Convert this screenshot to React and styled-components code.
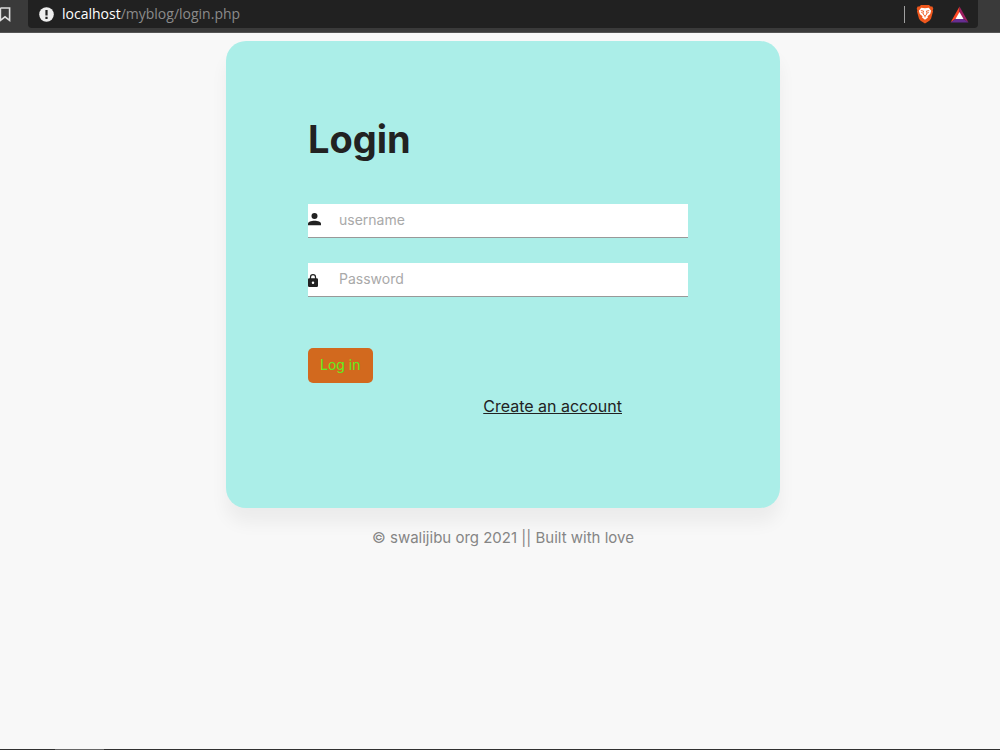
import React, { useState } from "react";
import styled, { createGlobalStyle } from "styled-components";

const GlobalStyle = createGlobalStyle`
  * {
    box-sizing: border-box;
  }

  body {
    margin: 0;
    background: #f8f8f8;
    color: #222;
    font-family: Inter, "Open Sans", sans-serif;
  }
`;

const Page = styled.div`
  min-height: 100vh;
  display: flex;
  flex-direction: column;
`;

// Browser chrome
const BrowserBar = styled.header`
  display: flex;
  height: 33px;
  padding-right: 22px;
  background: #3a3a3a;
  border-bottom: 1px solid #555;
`;

const BookmarkButton = styled.button`
  display: flex;
  align-items: center;
  width: 28px;
  height: 28px;
  padding: 0;
  border: none;
  background: none;
`;

const AddressBar = styled.div`
  flex: 1;
  display: flex;
  align-items: center;
  height: 28px;
  padding: 0 9px 0 11px;
  border-radius: 0 0 4px 4px;
  background: #212121;
`;

const Url = styled.div`
  flex: 1;
  margin-left: 8px;
  color: #8b8b8b;
  font-family: "Open Sans", sans-serif;
  font-size: 14px;
  line-height: 20px;

  span {
    color: #fff;
  }
`;

const Divider = styled.div`
  width: 1px;
  height: 17px;
  margin-right: 11px;
  background: #a0a0a0;
`;

const ShieldButton = styled.button`
  margin-right: ${(props) => (props.$spaced ? "16px" : "0")};
  padding: 0;
  border: none;
  background: none;
  line-height: 0;
`;

// Login page
const Main = styled.main`
  flex: 1;
  padding: 8px 0 0 6px;
`;

const Card = styled.section`
  width: 100%;
  max-width: 554px;
  margin: 0 auto;
  padding: 74px 92px 91px 82px;
  border-radius: 20px;
  background: #abeee8;
  box-shadow: 0 15px 17px rgba(0, 0, 0, 0.05);
`;

const Title = styled.h1`
  margin: 0 0 41px;
  font-size: 38px;
  font-weight: 700;
  line-height: 48px;
`;

const Field = styled.div`
  display: flex;
  align-items: center;
  height: 34px;
  margin-bottom: ${(props) => (props.$last ? "51px" : "25px")};
  border-bottom: 1px solid #999;
  background: #fff;
`;

const FieldLabel = styled.label`
  width: 31px;
  line-height: 0;
`;

const Input = styled.input`
  flex: 1;
  min-width: 0;
  height: 100%;
  padding: 0 0 2px;
  border: none;
  outline: none;
  background: transparent;
  color: #222;
  font-family: inherit;
  font-size: 14px;

  &::placeholder {
    color: #a9a9a9;
    opacity: 1;
  }
`;

const LoginButton = styled.button`
  display: block;
  height: 35px;
  padding: 0 12px 2px;
  border: none;
  border-radius: 5px;
  background: #d2691e;
  color: #5ff01e;
  font-family: inherit;
  font-size: 14px;
  cursor: pointer;
`;

const LinkRow = styled.div`
  display: flex;
  justify-content: flex-end;
  padding: 12px 66px 0 0;
`;

const CreateLink = styled.a`
  color: #222;
  font-size: 16px;
  line-height: 22px;
  text-decoration: underline;
  text-decoration-thickness: 1px;
`;

const Footer = styled.footer`
  padding-top: 18px;
  color: #858585;
  font-size: 15px;
  line-height: 24px;
  text-align: center;
`;

const TaskbarEdge = styled.div`
  height: 1px;
  background: linear-gradient(to right, #303030 55px, #666 55px, #666 104px, #303030 104px);
`;

const BookmarkIcon = () => (
  <svg width="11" height="15" viewBox="0 0 11 15" fill="none" stroke="#ddd" strokeWidth="1.6">
    <path d="M0.4 1h9.2v12.4L5 9.8 0.4 13.4V1" />
  </svg>
);

const InfoIcon = () => (
  <svg width="15" height="15" viewBox="0 0 15 15">
    <circle cx="7.5" cy="7.5" r="7.3" fill="#eee" />
    <path d="M6.4 3h2.2v5.4H6.4zM6.4 9.8h2.2V12H6.4z" fill="#212121" />
  </svg>
);

const BraveIcon = () => (
  <svg width="18" height="20" viewBox="0 0 18 20">
    <path
      d="M5 1h8l1.6 1.6 1.8-.2.9 2.3-.6 1.5.3 1.2-2 7.4-1.6 1.9L9 19.5l-4.4-2.8L3 14.8 1 7.4l.3-1.2-.6-1.5.9-2.3 1.8.2z"
      fill="#ee571d"
    />
    <path
      d="M5.2 3.8 9 4.3l3.8-.5 2.3 3-.9 3.2-2.7 2.2.4 1.3L9 15.8l-2.900-2.300.4-1.300L3.800 10l-.9-3.200z"
      fill="#fff"
    />
    <path
      d="m4.8 6.6 2.8.5-.6 1.8.9 2.3L9 12l1.1-.8.9-2.3-.6-1.8 2.8-.5M5.300 8.400l1.400.7M12.700 8.400l-1.400.7M9 12v1.400"
      fill="none"
      stroke="#ee571d"
      strokeWidth="0.9"
    />
  </svg>
);

const RewardsIcon = () => (
  <svg width="19" height="17" viewBox="0 0 19 17">
    <path d="M9.5 0.5 0.5 16.5 9.5 10z" fill="#ff4724" />
    <path d="M9.5 0.5 18.5 16.5 9.5 10z" fill="#9e1f63" />
    <path d="M0.5 16.5h18L9.5 10z" fill="#662d91" />
    <path d="m9.500 6 4 7h-8z" fill="#fff" />
  </svg>
);

const UserIcon = () => (
  <svg width="13" height="15" viewBox="0 0 13 15" fill="#222">
    <circle cx="6.5" cy="3.1" r="3" />
    <path d="M0 12.300v-1.600C0 8.700 3 7.700 6.500 7.700s6.500 1 6.500 3v1.600z" />
  </svg>
);

const LockIcon = () => (
  <svg width="10" height="15" viewBox="0 -3 16 24" fill="#222">
    <path d="M8 16a2 2 0 1 0 0-4 2 2 0 0 0 0 4zM14 7a2 2 0 0 1 2 2v10a2 2 0 0 1-2 2H2a2 2 0 0 1-2-2V9a2 2 0 0 1 2-2h1V5a5 5 0 0 1 10 0v2zM8 2a3 3 0 0 0-3 3v2h6V5a3 3 0 0 0-3-3z" />
  </svg>
);

const App = () => {
  const [username, setUsername] = useState("");
  const [password, setPassword] = useState("");

  const handleSubmit = (e) => {
    e.preventDefault();
  };

  return (
    <Page>
      <GlobalStyle />
      <BrowserBar>
        <BookmarkButton aria-label="Bookmark">
          <BookmarkIcon />
        </BookmarkButton>
        <AddressBar>
          <InfoIcon />
          <Url>
            <span>localhost</span>/myblog/login.php
          </Url>
          <Divider />
          <ShieldButton $spaced aria-label="Shields">
            <BraveIcon />
          </ShieldButton>
          <ShieldButton aria-label="Rewards">
            <RewardsIcon />
          </ShieldButton>
        </AddressBar>
      </BrowserBar>
      <Main>
        <Card>
          <Title>Login</Title>
          <form onSubmit={handleSubmit}>
            <Field>
              <FieldLabel htmlFor="username" aria-label="username">
                <UserIcon />
              </FieldLabel>
              <Input
                id="username"
                type="text"
                placeholder="username"
                value={username}
                onChange={(e) => setUsername(e.target.value)}
              />
            </Field>
            <Field $last>
              <FieldLabel htmlFor="password" aria-label="Password">
                <LockIcon />
              </FieldLabel>
              <Input
                id="password"
                type="password"
                placeholder="Password"
                value={password}
                onChange={(e) => setPassword(e.target.value)}
              />
            </Field>
            <LoginButton type="submit">Log in</LoginButton>
          </form>
          <LinkRow>
            <CreateLink href="#register">Create an account</CreateLink>
          </LinkRow>
        </Card>
        <Footer>© swalijibu org 2021 || Built with love</Footer>
      </Main>
      <TaskbarEdge />
    </Page>
  );
};

export default App;
